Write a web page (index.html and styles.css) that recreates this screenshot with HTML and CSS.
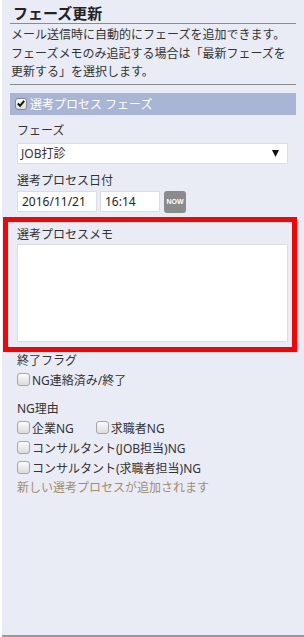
FILE: index.html
```html
<!DOCTYPE html>
<html lang="ja">
<head>
    <meta charset="UTF-8">
    <meta name="viewport" content="width=device-width, initial-scale=1.0">
    <title>フェーズ更新</title>
    <link rel="stylesheet" href="styles.css">
</head>
<body>

    <div class="panel">
        <h2 class="title">フェーズ更新</h2>
        <p class="desc">メール送信時に自動的にフェーズを追加できます。<br>フェーズメモのみ追記する場合は「最新フェーズを更新する」を選択します。</p>

        <div class="bar">
            <span class="box box-checked">
                <svg width="11" height="11" viewBox="0 0 11 11"><path d="M2 5.5 L4.5 8 L9 2.5" fill="none" stroke="#111" stroke-width="2.2"/></svg>
            </span>
            選考プロセス フェーズ
        </div>

        <div class="fields">
            <div class="label">フェーズ</div>
            <div class="select">
                <span>JOB打診</span>
                <svg class="arrow" width="7" height="7" viewBox="0 0 7 7"><path d="M0 0 H7 L3.5 7 Z" fill="#111"/></svg>
            </div>

            <div class="label gap">選考プロセス日付</div>
            <div class="date-row">
                <input class="date" type="text" value="2016/11/21">
                <input class="time" type="text" value="16:14">
                <button class="now" type="button">NOW</button>
            </div>

            <!-- 強調枠 -->
            <div class="memo">
                <div class="label">選考プロセスメモ</div>
                <textarea></textarea>
            </div>

            <div class="label">終了フラグ</div>
            <div class="row">
                <label class="item"><span class="box"></span>NG連絡済み/終了</label>
            </div>

            <div class="label far">NG理由</div>
            <div class="row">
                <label class="item"><span class="box"></span>企業NG</label>
                <label class="item"><span class="box"></span>求職者NG</label>
            </div>
            <div class="row">
                <label class="item"><span class="box"></span>コンサルタント(JOB担当)NG</label>
            </div>
            <div class="row">
                <label class="item"><span class="box"></span>コンサルタント(求職者担当)NG</label>
            </div>
            <div class="note">新しい選考プロセスが追加されます</div>
        </div>
    </div>

</body>
</html>
```

FILE: styles.css
```css
body {
    margin: 0;
    background-color: #fff;
    font-family: "Noto Sans", "Noto Sans CJK JP", sans-serif;
    font-size: 12px;
    color: #333;
}

.panel {
    margin-left: 2px;
    height: 637px;
    box-sizing: border-box;
    background-color: #e9ecf5;
    border-bottom: 2px solid #999;
    padding: 0 8px;
}

.title {
    margin: 0;
    padding: 3px 0 0 3px;
    height: 20px;
    line-height: 20px;
    font-size: 15px;
    font-weight: bold;
    color: #222;
    border-bottom: 1px solid #8c8c8c;
}

.desc {
    margin: 0;
    padding: 2px 0 2px 1px;
    line-height: 18.5px;
    border-bottom: 1px solid #8c8c8c;
}

.bar {
    margin-top: 8px;
    height: 22px;
    display: flex;
    align-items: center;
    gap: 3px;
    padding-left: 5px;
    background-color: #a8b5d5;
    color: #fff;
}

.box {
    width: 13px;
    height: 13px;
    box-sizing: border-box;
    border: 1px solid #a5a5a5;
    border-radius: 3px;
    background: linear-gradient(#fbfbfb, #dcdcdc);
    display: inline-flex;
    align-items: center;
    justify-content: center;
    flex-shrink: 0;
}

.box-checked {
    width: 12px;
    height: 12px;
    border-color: #888;
}

.fields {
    padding: 7px 8px 0 7px;
}

.label {
    line-height: 18px;
}

.label.gap {
    margin-top: 8px;
}

.label.far {
    margin-top: 10px;
}

.select {
    margin-top: 3px;
    height: 21px;
    box-sizing: border-box;
    display: flex;
    align-items: center;
    justify-content: space-between;
    padding: 0 8px 0 3px;
    background-color: #fff;
    border: 1px solid #dcdde3;
}

.date-row {
    margin-top: 1px;
    height: 22px;
    display: flex;
    align-items: center;
    gap: 3px;
}

.date-row input {
    height: 21px;
    box-sizing: border-box;
    margin: 0;
    padding: 0 0 0 4px;
    border: 1px solid #dcdde3;
    background-color: #fff;
    font-family: inherit;
    font-size: 12px;
    color: #222;
}

.date {
    width: 80px;
}

.time {
    width: 60px;
}

.now {
    margin-left: 1px;
    width: 22px;
    height: 22px;
    padding: 0;
    border: none;
    border-radius: 3px;
    background-color: #8b8b8b;
    color: #fff;
    font-family: "Liberation Sans", Arial, sans-serif;
    font-size: 7px;
    font-weight: bold;
}

.memo {
    margin: 4px -9px 0 -14px;
    border: 5px solid #f00;
    padding: 4px 4px 5px 9px;
}

textarea {
    display: block;
    width: 100%;
    height: 98px;
    box-sizing: border-box;
    margin: 0;
    border: 1px solid #dcdde3;
    background-color: #fff;
    resize: none;
}

.row {
    height: 20px;
    display: flex;
    align-items: center;
    gap: 22px;
}

.item {
    display: flex;
    align-items: center;
    gap: 2px;
}

.note {
    line-height: 20px;
    color: #a38c6d;
}
```
